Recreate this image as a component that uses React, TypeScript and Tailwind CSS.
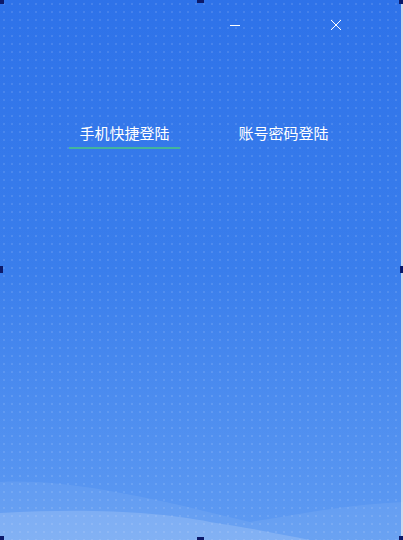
import React from "react";

const handles = [
  "left-[-3px] top-[-3px]",
  "left-[197px] top-[-4px]",
  "right-[-3px] top-[-3px]",
  "left-[-4px] top-[266px]",
  "right-[-4px] top-[266px]",
  "left-[-3px] bottom-[-3px]",
  "left-[197px] bottom-[-4px]",
  "right-[-3px] bottom-[-3px]",
];

function Tab({ label, active }: { label: string; active?: boolean }) {
  return (
    <div className="flex w-[111px] flex-col items-center">
      <span className="h-[20px] text-[15px] leading-[20px] text-white">{label}</span>
      <div className={active ? "mt-[4px] h-[2px] w-full bg-[#43b59c]" : "mt-[4px] h-[2px] w-full"} />
    </div>
  );
}

export default function App() {
  return (
    <div
      className="relative h-[540px] w-[403px] overflow-hidden bg-linear-to-b from-[#2e72e9] via-[#3a7eec] to-[#5f9bf2]"
      style={{ fontFamily: '"Noto Sans CJK SC", "Noto Sans", sans-serif' }}
    >
      <div className="flex h-full flex-col border-r-2 border-[#cdd9ee] bg-[radial-gradient(circle,rgba(255,255,255,0.11)_0.8px,transparent_1px)] bg-size-[8px_8px]">
        {/* title bar */}
        <div className="flex h-[50px] items-center pl-[230px]">
          <div className="h-[1px] w-[10px] bg-white" />
          <svg className="ml-[90px]" width="12" height="12" viewBox="0 0 12 12">
            <path d="M1 1 L11 11 M11 1 L1 11" stroke="white" strokeWidth="1" />
          </svg>
        </div>

        {/* tabs */}
        <div className="mt-[73px] flex gap-[48px] pl-[69px]">
          <Tab label="手机快捷登陆" active />
          <Tab label="账号密码登陆" />
        </div>

        {/* waves */}
        <svg className="mt-auto block" width="403" height="70" viewBox="0 0 403 70">
          <path d="M0 12 C70 8 160 30 250 52 C300 44 350 34 403 32 L403 70 L0 70 Z" fill="rgba(255,255,255,0.07)" />
          <path d="M0 43 C90 38 160 42 210 52 C250 58 280 64 310 70 L0 70 Z" fill="rgba(255,255,255,0.16)" />
        </svg>
      </div>

      {handles.map((h) => (
        <div key={h} className={`absolute h-[7px] w-[7px] bg-[#0c1a6b] ${h}`} />
      ))}
    </div>
  );
}
